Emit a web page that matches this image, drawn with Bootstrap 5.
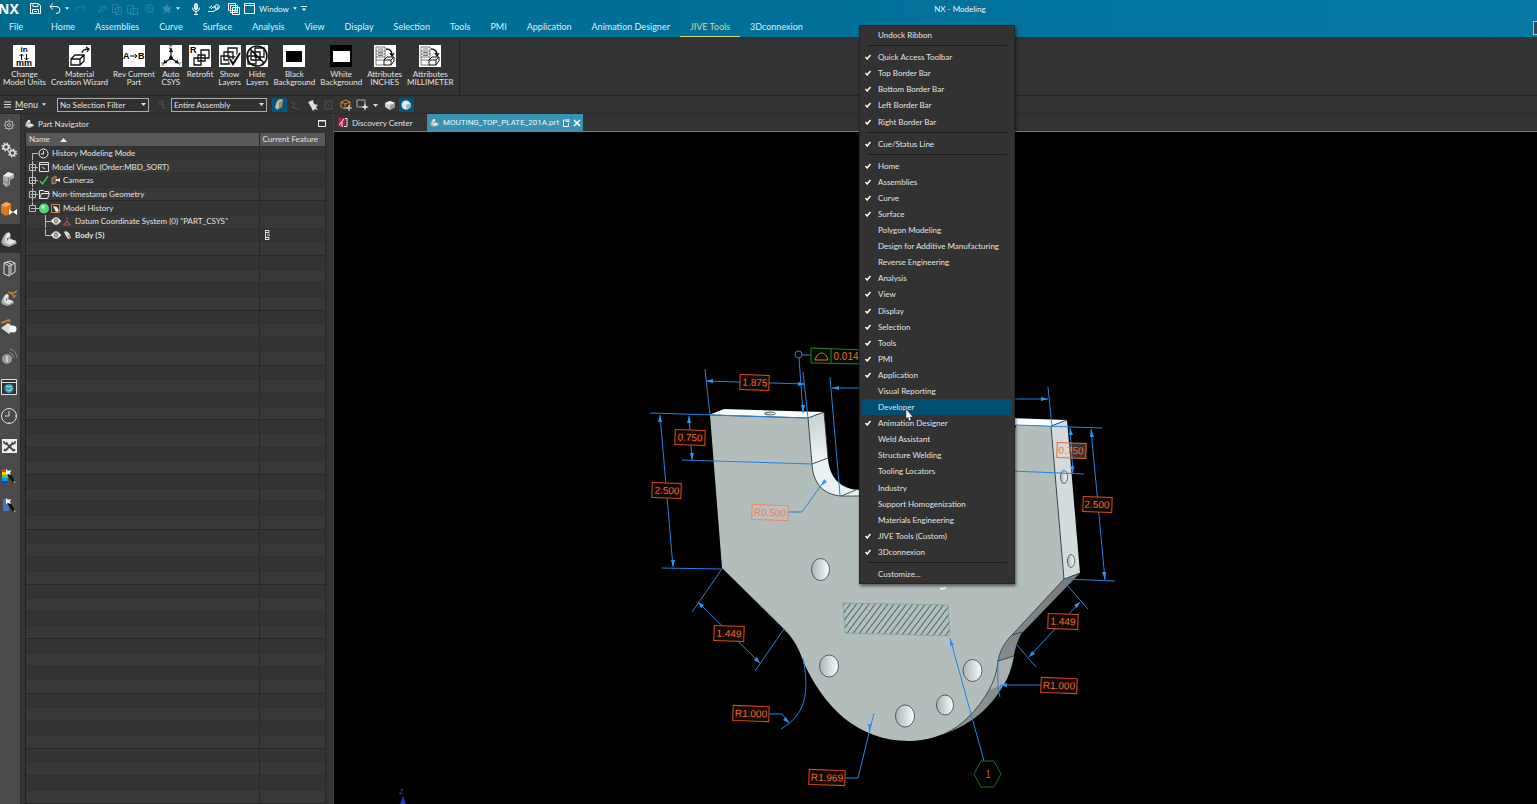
<!DOCTYPE html>
<html lang="en" data-bs-theme="dark">
<head>
<meta charset="utf-8">
<meta name="viewport" content="width=device-width, initial-scale=1">
<title>NX - Modeling</title>
<link href="https://cdn.jsdelivr.net/npm/bootstrap@5.3.0/dist/css/bootstrap.min.css" rel="stylesheet">
<style>
:root{--panel:#333;--ink:#e2e2e2;--line:#232323}
body{font:8px/12px Lato,"Noto Sans",sans-serif;background:#000;color:var(--ink)}
button,select{font:inherit;color:inherit;background:none;border:0;padding:0}
svg{display:block;flex:none;overflow:visible}
.topbar{background:linear-gradient(90deg,#006a8f,#007098 50%,#0578a4);color:#e6f4f8}
.quick{height:17px}
.quick button{height:16px}
.app-title{padding-left:76px}
.brand{font:bold 14px/16px "Noto Sans",sans-serif;color:#fff;width:20px;margin-left:-2px}
.menu-tabs{height:20px}
.menu-tabs a{font-size:9px;line-height:12px;color:#dcf0f6;padding:4px 10px 3px;border-bottom:1px solid transparent;text-decoration:none}
.menu-tabs a:first-child{padding-left:9px;padding-right:18px}
.menu-tabs a.active{color:#d9d489;border-color:#d9d489}
.dock-toggle{width:4px;height:14px;border:1px solid #9cc;background:#345;border-right:0}
.ribbon{background:var(--panel);height:59px;border-bottom:1px solid var(--line)}
.tools-group{border-right:1px solid var(--line);margin-top:3px;padding-top:4px;padding-right:3px}
.tool{line-height:8px;padding:0 2px 0 3px;min-width:27px}
.tool svg{margin:1px auto 3px}
.tool text{font-family:"Liberation Sans",sans-serif}
.filters{background:var(--panel);height:18px;border-bottom:1px solid #2a2a2a}
.filters select{height:14px;border:1px solid #aaa;appearance:none;padding:0 2px;background:#303030;line-height:12px;border-radius:0}
.menu-word{font-size:9px}
.pick{position:relative}
.pick svg{position:absolute;right:3px;top:5px;pointer-events:none}
.first-pick{margin-left:11px}
.pick-narrow{width:92px}
.pick-wide{width:96px}
.rail{width:20px;background:#4a4a4a}
.rail .gear{height:21px}
.rail-list{height:385px}
.rail-list button{flex:1 1 0;min-height:0;width:20px}
.rail-list .active{background:#303030}
.navigator{width:314px;background:var(--panel);padding:0 7px 0 4px;border-left:1px solid #282828;border-right:1px solid #444}
.nav-title{height:19px}
.tree{border-left:1px solid #222;border-right:1px solid #282828}
.tree table{height:100%;table-layout:fixed;color:var(--ink);font-size:8px}
.tree th,.tree td{padding:0;line-height:12px;border:0;border-bottom:1px solid #303030;height:13px;background:#343434;color:inherit;box-shadow:none;white-space:nowrap;vertical-align:middle}
.tree tr:nth-child(even) td{background:#383838}
.tree tr:nth-child(4n) td{border-bottom-color:#292929}
.tree th:first-child,.tree td:first-child{border-right:1px solid #282828}
.tree thead th{background:#585858;font-weight:400;padding-left:3px}
.name-col{width:233px}
.docs{height:18px;background:var(--panel);border-bottom:1px solid #3d94ad}
.doc{height:17px;padding:0 3px}
.doc-label{width:72px}
.doc.current{background:#3992b2;color:#eaf8fc;font-family:Roboto,sans-serif}
.context{position:absolute;left:859px;top:25px;width:156px;height:559px;background:#323232;border:1px solid #262626;padding:1px 2px;box-shadow:1px 2px 3px #0008;z-index:5}
.context button{flex:1 1 0;min-height:0;padding-left:3px;text-align:left}
.context button.hot{background:#004f73}
.context .tick{width:13px}
.context hr{margin:2px 5px 3px;border:0;border-top:1px solid #1d1d1d;opacity:1}
.pointer{position:absolute;left:905px;top:409px;z-index:6}
.dim{stroke:#2585dd;fill:none;stroke-width:1}
.heads{fill:#3196f2}
.frame rect{fill:#130703;stroke:#d94e1c}
.frame text{font:10px "Liberation Sans",sans-serif;fill:#f26a2c;text-anchor:middle}
.frame .pale rect{fill:#c4bdb8;stroke:#e58a6c}
.frame .pale text{fill:#e58260}
.frame .split rect{fill:#f8c8b840;stroke:#e06a45}
.frame .split text{fill:#ec7042}
</style>
</head>
<body class="vh-100 d-flex flex-column overflow-hidden position-relative">

<svg width="0" height="0" class="position-absolute" aria-hidden="true">
 <symbol id="caret" viewBox="0 0 5 3"><path d="M0 0h5L2.500 3z" fill="currentColor"/></symbol>
 <symbol id="check" viewBox="0 0 6 6"><path d="M.5 3 2.200 5 5.500 1" fill="none" stroke="#fff" stroke-width="1.500"/></symbol>
 <symbol id="part" viewBox="0 0 14 14"><path d="M0 10Q2 3 5 1.500 8 0 8.500 3L8 6.500 13 8.500 14 11 7 14 2 12.500z" fill="#a4aaac"/><path d="M5 2Q7.500.500 8 3L7 7 3 9.500Q3 5 5 2zM3 10l5-3 5.500 2L8 12z" fill="#e4e6e6"/><path d="M5 7q2-3 1.500-1L6 8z" fill="#555"/></symbol>
 <symbol id="cube" viewBox="0 0 12 12"><path d="m1 4 5-2 5 2v4l-5 3-5-3z" fill="#ccc"/><path d="m1 4 5-2 5 2-5 2z" fill="#f5f5f5"/><path d="m6 6 5-2v4l-5 3z" fill="#999"/></symbol>
 <symbol id="boxes" viewBox="0 0 22 22"><path d="M9 3h9v9H9zM5 7h9v8H5zM2 11h8v8H2z" fill="#fff" stroke="#111" stroke-width="1.300"/></symbol>
 <symbol id="attr" viewBox="0 0 22 22"><path fill="#fff" d="M0 0h22v22H0z"/><path d="M2 2h9v18H2zM2 6h9M2 9h9M2 12h9M2 15h9M4 4h5M4 7.500h5M4 10.500h5" fill="none" stroke="#555" stroke-width=".8"/><path d="M12 4q6 0 6 6m-2-2 2 3 2-3" fill="none" stroke="#111" stroke-width="1.300"/><path d="m10 15 3-3h7v4l-3 4h-7zm0 0h7v5m0-5 3-3" fill="#fff" stroke="#111"/></symbol>
 <symbol id="plus" viewBox="0 0 7 7"><path d="M.5.5h6v6h-6zM2 3.500h3M3.500 2v3" fill="none" stroke="#bbb"/></symbol>
 <symbol id="eye" viewBox="0 0 10 8"><path d="M0 4q5-7 10 0-5 7-10 0" fill="#f2f2f2"/><circle cx="5" cy="4" r="2.200" fill="#222"/><circle cx="5" cy="4" r="1" fill="#eee"/></symbol>
</svg>

<header class="topbar">
 <div class="quick d-flex align-items-center">
  <span class="brand">NX</span>
  <button aria-label="Save" class="ms-2 ps-1"><svg width="11" height="11" viewBox="0 0 11 11" fill="none" stroke="#fff"><path d="M.5.5h8l2 2v8H.5zM3 .5v3h5v-3M2.500 10.500v-4h6v4M4 8.500h3"/></svg></button>
  <button aria-label="Undo" class="ms-2"><svg width="12" height="11" viewBox="0 0 12 11" fill="none" stroke="#fff"><path d="M4 .5.800 3.500 4 6.500M1 3.500h6q4 0 4 3.500t-4 3.500"/></svg></button>
  <button aria-label="Undo list" class="ms-1"><svg width="4" height="3"><use href="#caret"/></svg></button>
  <svg class="ms-1" width="95" height="12" viewBox="0 0 95 12" fill="none" stroke="#2681a1"><path d="m9 1 3 3-3 3m3-3H6q-4 0-4 4M26 8l7-6M28 3v3l-3 3h3l6-4zM39.500 1.500h6v8h-6zM42.500 4.500h6v7h-6zM54.500 2.500h6v8h-6zM57.500 5.500h7v6h-7z"/><circle cx="76" cy="5.500" r="4"/><path d="M73 5h7v6M76 2v7"/><path d="m94 1 1.500 3 3.500.500-2.500 2 .5 3.500-3-1.700L91 10l.5-3.500-2.500-2 3.500-.5z" fill="#318db1"/></svg>
  <button aria-label="Favourites list" class="ms-2"><svg width="4" height="3"><use href="#caret"/></svg></button>
  <button aria-label="Voice" class="ms-2 ps-1"><svg width="8" height="12" viewBox="0 0 8 12" fill="none" stroke="#fff"><rect x="2.500" y=".5" width="3" height="6" rx="1.500" fill="#cde"/><path d="M.5 4.500q0 4 3.500 4t3.500-4M4 8.500v3M2 11.500h4"/></svg></button>
  <button aria-label="Touch mode" class="ms-2"><svg width="12" height="9" viewBox="0 0 12 9" fill="none" stroke="#fff"><path d="M0 7.500h5l4-2 1-3M3 5l2-2h3M1 4l3-2"/><circle cx="9" cy="3" r="2.300"/></svg></button>
  <button aria-label="Windows" class="ms-2"><svg width="12" height="12" viewBox="0 0 12 12" fill="#006d92" stroke="#fff"><path d="M.5.5h7v7h-7zM2.500 2.500h7v7h-7zM4.500 4.500h7v7h-7zM6 7h4M6 9h4"/></svg></button>
  <button class="ms-1 d-flex align-items-center gap-1"><svg width="11" height="11" viewBox="0 0 11 11" fill="none" stroke="#fff"><path d="M.5.5h10v10H.5zM.5 2.500h10"/></svg>Window<svg width="4" height="3"><use href="#caret"/></svg></button>
  <button aria-label="Customize toolbar" class="ms-1"><svg width="6" height="6" viewBox="0 0 6 6"><path d="M0 .5h6" stroke="#fff"/><path d="M1 2.500h4L3 5z" fill="#fff"/></svg></button>
  <div class="app-title flex-grow-1 text-center">NX - Modeling</div>
 </div>
 <nav class="menu-tabs d-flex align-items-start">
  <a href="#">File</a><a href="#">Home</a><a href="#">Assemblies</a><a href="#">Curve</a><a href="#">Surface</a><a href="#">Analysis</a><a href="#">View</a><a href="#">Display</a><a href="#">Selection</a><a href="#">Tools</a><a href="#">PMI</a><a href="#">Application</a><a href="#">Animation Designer</a><a href="#" class="active">JIVE Tools</a><a href="#">3Dconnexion</a>
  <span class="dock-toggle ms-auto mt-1"></span>
 </nav>
</header>

<section class="ribbon d-flex" aria-label="JIVE Tools">
 <div class="tools-group d-flex align-items-start">
  <button class="tool"><svg width="22" height="22"><path fill="#fff" d="M0 0h22v22H0z"/><g font-size="9" font-weight="bold" text-anchor="middle"><text x="11" y="7" font-size="8">in</text><text x="11" y="21">mm</text></g><path d="M8.500 15V9M6.500 11l2-2 2 2M13.500 9v6M11.500 13l2 2 2-2" fill="none" stroke="#111"/></svg>Change<br>Model Units</button>
  <button class="tool"><svg width="22" height="22"><path fill="#fff" d="M0 0h22v22H0z"/><path d="m2 14 4-4h9v6l-4 4H2zm0 0h9v6m0-6 4-4M13 8q0-4 7-4m-3-2 3 2-2 3" fill="none" stroke="#111" stroke-width="1.300"/></svg>Material<br>Creation Wizard</button>
  <button class="tool"><svg width="22" height="22"><path fill="#fff" d="M0 0h22v22H0z"/><g font-size="9" font-weight="bold"><text x="0" y="14">A</text><text x="15" y="14">B</text></g><path d="M7 11h7m-2-2 2 2-2 2" fill="none" stroke="#111"/></svg>Rev Current<br>Part</button>
  <button class="tool"><svg width="22" height="22"><path fill="#fff" d="M0 0h22v22H0z"/><path d="M11 13V5M9.500 7 11 4l1.500 3M11 13l-7 5m1-3-1 3 3-.5M11 13l7 5m-1-3 1 3-3-.5" fill="none" stroke="#111" stroke-width="1.200"/><circle cx="11" cy="13" r="2" fill="#111"/><g font-size="5"><text x="9" y="4">Z</text><text x="1" y="21">X</text><text x="18" y="21">Y</text></g></svg>Auto<br>CSYS</button>
  <button class="tool"><svg width="22" height="22"><path fill="#fff" d="M0 0h22v22H0z"/><path d="M12 5h8v8h-8zM9 10h7v6H9zM5 13h7v7H5z" fill="#fff" stroke="#111" stroke-width="1.300"/><text x="1" y="8" font-size="9" font-weight="bold">R</text></svg>Retrofit</button>
  <button class="tool"><svg width="22" height="22"><path fill="#fff" d="M0 0h22v22H0z"/><use href="#boxes"/><path d="m11 14 3 5 7-11" fill="none" stroke="#fff" stroke-width="4"/><path d="m11 14 3 5 7-11" fill="none" stroke="#111" stroke-width="2"/></svg>Show<br>Layers</button>
  <button class="tool"><svg width="22" height="22"><path fill="#fff" d="M0 0h22v22H0z"/><use href="#boxes"/><circle cx="11" cy="11" r="10" fill="none" stroke="#111" stroke-width="1.600"/><path d="m4 4 14 14" stroke="#111" stroke-width="1.600"/></svg>Hide<br>Layers</button>
  <button class="tool"><svg width="22" height="22"><path fill="#fff" d="M0 0h22v22H0z"/><path d="M3 6h16v11H3z"/></svg>Black<br>Background</button>
  <button class="tool"><svg width="22" height="22"><path d="M0 0h22v22H0z"/><path d="M3 6h17v11H3z" fill="#fff"/></svg>White<br>Background</button>
  <button class="tool"><svg width="22" height="22"><use href="#attr"/></svg>Attributes<br>INCHES</button>
  <button class="tool"><svg width="22" height="22"><use href="#attr"/></svg>Attributes<br>MILLIMETER</button>
 </div>
</section>

<section class="filters d-flex align-items-center">
 <button class="d-flex align-items-center ms-1"><svg width="7" height="7" class="me-1" stroke="#ddd"><path d="M0 1h7M0 3.500h7M0 6h7"/></svg><span class="menu-word me-1"><u>M</u>enu</span><svg width="4" height="3"><use href="#caret"/></svg></button>
 <div class="pick first-pick"><select class="pick-narrow" aria-label="Selection filter"><option>No Selection Filter</option></select><svg width="5" height="3"><use href="#caret"/></svg></div>
 <svg width="6" height="10" class="mx-2" stroke="#555" fill="none"><path d="M1 1h5v5M1 4h5v4h3"/></svg>
 <div class="pick"><select class="pick-wide" aria-label="Selection scope"><option>Entire Assembly</option></select><svg width="5" height="3"><use href="#caret"/></svg></div>
 <svg class="ms-2" width="142" height="14" viewBox="275 98 142 14">
  <path fill="#00567d" d="M272 98h15v14h-15zM399 98h15v14h-15z"/>
  <path d="m275 107 2-6 3-2 3 1-2 6-4 4z" fill="#b9bcae"/><path d="m279 102 4-1-1 6-3 2z" fill="#bd7a3d"/>
  <g fill="none" stroke="#555"><path d="m291 102 4 2-3 3 7 2M325 101h7v8h-7zM327 103l3 4"/></g>
  <path d="m308 102 5-2 1 4 4 1-2 2 2 3-3-1-2 2-2-4z" fill="#ddd"/>
  <path d="m341 102 5-2 4 2v4l-5 3-4-2zm0 0 4 2 5-2m-5 2v5" fill="none" stroke="#e08030"/><path d="M349 105v6m-3-3h6" stroke="#ddd"/>
  <path d="M357 100h8v7h-8z" fill="none" stroke="#aaa"/><path d="m365 103 1 3 3 1-3 1-1 3-1-3-3-1 3-1z" fill="#ddd"/>
  <path d="M373 104h5l-2.500 3z" fill="#ddd"/>
  <use href="#cube" x="384" y="99" width="12" height="12"/>
  <circle cx="406" cy="105" r="4.500" fill="#dfe9ec"/><path d="m406 105 5-2v4l-4 3z" fill="#8db8c8"/>
 </svg>
</section>

<main class="d-flex flex-grow-1" style="min-height:0">
 <aside class="rail">
  <button class="gear d-flex w-100 align-items-center ps-1" aria-label="Settings"><svg width="10" height="10" viewBox="0 0 10 10" fill="none" stroke="#bbb"><circle cx="5" cy="5" r="4"/><circle cx="5" cy="5" r="1.500"/><path d="M5-.5v1M5 9.500v1M-.5 5h1M9.500 5h1M1 1l.7.7M9 1l-.7.7M1 9l.7-.7M9 9l-.7-.7"/></svg></button>
  <div class="rail-list d-flex flex-column">
   <button aria-label="Assembly constraints"><svg width="18" height="18" fill="none" stroke="#ddd" stroke-width="1.500"><circle cx="6" cy="6" r="2.500"/><circle cx="12.500" cy="12" r="2.500"/><circle cx="6" cy="6" r="3.800" stroke-dasharray="1.500 1.500"/><circle cx="12.500" cy="12" r="3.800" stroke-dasharray="1.500 1.500"/></svg></button>
   <button aria-label="Assembly navigator"><svg width="18" height="18"><path d="m3 6 5-4 6 2v4l-4 2v5l-4 2-3-3z" fill="#aaa"/><path d="m3 6 5-4 6 2-5 3z" fill="#eee"/><path d="m9 7-1 9M3 11l5 2" stroke="#777"/></svg></button>
   <button aria-label="Constraint navigator"><svg width="18" height="18"><path d="m1 5 5-3 5 2v9l-5 3-5-3z" fill="#d9781f"/><path d="m1 5 5-3 5 2-5 3z" fill="#f5aa55"/><path d="m9 9 4 3-4 3zM17 9l-4 3 4 3z" fill="#fff"/></svg></button>
   <button class="active" aria-label="Part navigator"><svg width="18" height="18" viewBox="-1 -1 16 16"><use href="#part" width="14" height="14"/></svg></button>
   <button aria-label="Reuse library"><svg width="18" height="18" fill="none" stroke="#ddd"><path d="m4 4 6-2 5 2v9l-6 4-5-2zm0 0 5 3 6-3M9 7v10M6 3l5 2v10"/></svg></button>
   <button aria-label="HD3D tools"><svg width="18" height="18"><use href="#part" x="1" y="4" width="13" height="13"/><path d="m8 3 4 2 5-3m-6 1 3 5 2-2" fill="none" stroke="#c07a2c" stroke-width="1.500"/></svg></button>
   <button aria-label="Measure"><svg width="18" height="18"><path d="m1 10 7-5 7 5-6 6z" fill="#ddd"/><path d="m1 5 8-3 1 2" fill="none" stroke="#c27a33" stroke-width="2"/><circle cx="13" cy="11" r="3.500" fill="#fff"/></svg></button>
   <button aria-label="Notifications"><svg width="18" height="18"><circle cx="7" cy="11" r="5" fill="#999"/><path d="M7 8v6" stroke="#ccc" stroke-width="2"/><path d="M9 4q4 1 5 6M10 1q6 1 7 9" fill="none" stroke="#888"/></svg></button>
   <button aria-label="Web browser"><svg width="18" height="18"><path d="M1.500 1.500h15v15h-15zM1.500 4.500h15" fill="#333" stroke="#ddd"/><circle cx="9" cy="10.500" r="4.500" fill="#299eb8"/><path d="m6 8 3 1 3-1M7 12l3 1 2-3" fill="none" stroke="#b8e6ee"/></svg></button>
   <button aria-label="History"><svg width="18" height="18" fill="none" stroke="#ddd"><circle cx="9" cy="9" r="7.500"/><path d="M9 4v5H5M9 15v1M15 9h1"/></svg></button>
   <button aria-label="Process studio"><svg width="18" height="18"><path d="M2 2h15v14H2z" fill="#eee"/><path d="m6 6 8 8M13 6l-8 8" stroke="#444" stroke-width="1.800"/><path d="M4 4v2l2 1 1-2M15 4v2l-2 1-1-2M5 12l-1 2M14 12l1 2" fill="none" stroke="#444" stroke-width="1.500"/></svg></button>
   <button aria-label="Visualization"><svg width="18" height="18"><path fill="#e31" d="M2 2h6v3H2z"/><path fill="#fc0" d="M2 5h6v3H2z"/><path fill="#3d3" d="M2 8h6v3H2z"/><path fill="#09e" d="M2 11h6v3H2z"/><path fill="#23c" d="M2 14h6v2H2z"/><path d="m8 6 6 9" stroke="#111" stroke-width="3"/><path d="m6 2 2 2 3-1-1 3 1 2-3-1-2 1z" fill="#fff"/><path d="m14 14 1 2" stroke="#e5d34a"/></svg></button>
   <button aria-label="Roles"><svg width="18" height="18"><path fill="#4774ba" d="M3 3h6v12H3z"/><path d="m8 6 6 9" stroke="#111" stroke-width="3"/><path d="m6 2 2 2 3-1-1 3 1 2-3-1-2 1z" fill="#fff"/><path d="m14 14 1 2" stroke="#e5d34a"/></svg></button>
  </div>
 </aside>

 <section class="navigator d-flex flex-column" aria-label="Part Navigator">
  <div class="nav-title d-flex align-items-center"><svg width="9" height="9" class="me-1"><use href="#part"/></svg><span>Part Navigator</span><button class="ms-auto" aria-label="Maximize"><svg width="8" height="7"><path d="M.5.5h7v6h-7z" fill="none" stroke="#eee"/><path d="M0 1h8" stroke="#eee"/></svg></button></div>
  <div class="tree flex-grow-1" style="min-height:0">
   <table class="table mb-0">
    <colgroup><col class="name-col"><col></colgroup>
    <thead><tr><th scope="col">Name <svg class="d-inline-block ms-2" width="7" height="4"><path d="M0 4h7L3.500 0z" fill="#eee"/></svg></th><th scope="col">Current Feature</th></tr></thead>
    <tbody id="rows">
     <tr><td><div class="d-flex"><svg width="26" height="12" fill="none" stroke="#bbb"><path d="M6.500 13V6.500H12"/><circle cx="17.500" cy="6.500" r="4.500" stroke="#eee"/><path d="M17.500 4v3H15" stroke="#eee"/></svg>History Modeling Mode</div></td><td></td></tr>
     <tr><td><div class="d-flex"><svg width="26" height="12" fill="none" stroke="#bbb"><path d="M6.500 0v13M6 6.500h6"/><use href="#plus" x="3" y="3" width="7" height="7"/><path d="M13.500 1.500h9v9h-9zM13.500 3.500h9M16 6l3 2" stroke="#ddd"/></svg>Model Views (Order:MBD_SORT)</div></td><td></td></tr>
     <tr><td><div class="d-flex"><svg width="37" height="12" fill="none" stroke="#bbb"><path d="M6.500 0v13M6 6.500h6"/><use href="#plus" x="3" y="3" width="7" height="7"/><path d="m14 7 2.500 3L22 2" stroke="#2fc94b" stroke-width="1.500"/><path d="m26 4 4-2v7l-4 1z" fill="#555" stroke="#c88b50"/><path d="M30 5h2l2-1v4l-2-1h-2z" fill="#ddd" stroke="none"/></svg>Cameras</div></td><td></td></tr>
     <tr><td><div class="d-flex"><svg width="26" height="12" fill="none" stroke="#bbb"><path d="M6.500 0v13M6 6.500h6"/><use href="#plus" x="3" y="3" width="7" height="7"/><path d="M13.500 10.500v-8h4l1 1h4v2m-9 5 2-5h8l-2 5z" stroke="#eee"/></svg>Non-timestamp Geometry</div></td><td></td></tr>
     <tr><td><div class="d-flex"><svg width="37" height="12" fill="none" stroke="#bbb"><path d="M6.500 0v3M7 6.500h6M3.500 3.500h6v6h-6zM5 6.500h3"/><circle cx="18" cy="6.500" r="5" fill="#4fd972" stroke="none"/><circle cx="17" cy="5" r="2" fill="#a2f3b5" stroke="none"/><path d="M25.500 2.500h8v8h-8z" stroke="#d2843e"/><path d="m27 4 4 1 2 4-3 1z" fill="#eee" stroke="none"/></svg>Model History</div></td><td></td></tr>
     <tr><td><div class="d-flex"><svg width="49" height="12" fill="none" stroke="#bbb"><path d="M19.500 0v13M19 6.500h6"/><use href="#eye" x="25" y="2" width="10" height="8"/><path d="M41 2v5l-4 3M41 7l4 3M38 10h6L41 6z" stroke="#a84866"/></svg>Datum Coordinate System (0) "PART_CSYS"</div></td><td></td></tr>
     <tr><td><div class="d-flex fw-bold"><svg width="49" height="12" fill="none" stroke="#bbb"><path d="M19.500 0v6.500H25"/><use href="#eye" x="25" y="2" width="10" height="8"/><path d="m38 3 2-1 3 2 2 5-3 1-2-3z" fill="#ddd" stroke="none"/><path d="m41 6 4 1-1 3z" fill="#b9854e" stroke="none"/></svg>Body (5)</div></td><td><svg width="18" height="10" fill="none" stroke="#ddd"><path d="M5.500 0v10M5 .5h4v2H5M5 9.500h4v-2H5"/><path d="M7.500 4h2v2h-2z" stroke="#d08a45"/></svg></td></tr>
    </tbody>
   </table>
  </div>
 </section>

 <section class="d-flex flex-column flex-grow-1" style="min-width:0">
  <div class="docs d-flex">
   <button class="doc d-flex align-items-center"><svg width="11" height="11" class="me-1"><path d="M1 1h7v9H2z" fill="#a8214a"/><path d="m2 8 5-6M8 1.500h2v8H7M5 5v5" fill="none" stroke="#eee"/></svg><span class="doc-label text-start">Discovery Center</span></button>
   <button class="doc current d-flex align-items-center"><svg width="9" height="9" class="me-1"><use href="#part"/></svg><span>MOUTING_TOP_PLATE_201A.prt</span><svg class="ms-1" width="7" height="8" fill="none" stroke="#fff"><path d="M5 1H.5v6.500h5V4M3 2.500h3V0"/></svg><svg class="ms-1" width="6" height="6" stroke="#fff" stroke-width="1.500"><path d="m0 0 6 6M6 0 0 6"/></svg></button>
  </div>
  <div class="flex-grow-1" style="min-height:0">
  <svg class="w-100 h-100 overflow-hidden" viewBox="334 132 1203 672" preserveAspectRatio="xMinYMin meet" role="img" aria-label="Mounting plate model with dimensions">
   <defs>
    <linearGradient id="hole"><stop stop-color="#aab4b3"/><stop offset="1" stop-color="#fafefe"/></linearGradient>
    <linearGradient id="edge" x2="1" y2="0"><stop stop-color="#9ba2a3"/><stop offset="1" stop-color="#737879"/></linearGradient>
    <linearGradient id="wall" x2="0" y2="1"><stop stop-color="#c6cecf"/><stop offset="1" stop-color="#f0f7f8"/></linearGradient>
    <pattern id="hatch" width="5" height="5" patternUnits="userSpaceOnUse" patternTransform="rotate(37)"><path d="M2.500 0v5" stroke="#4d6876"/></pattern>
   </defs>
   <path fill="url(#edge)" d="M1064 579 1080 573 1021 634Q1016 644 1014 655 1010 675 1003 686C990 708 972 724 944 734L909 741 960 640z"/>
   <path fill="#b2bdbc" d="M710 415 808 418 812 464C813 482 822 495 842 496H1000L1016 425 1051 426 1064 579 1012 635C1004 643 1000 651 998 661 997 672 994 681 989 690 971 722 943 741 909 741 857 741 823 706 803 661 799 648 793 638 784 629L722 568z"/>
   <path fill="#f7fcfc" d="M709 415 724 409 824 412 808 418zM1010 418 1067 420 1051 426 1010 425z"/>
   <path fill="url(#wall)" d="M808 418 824 412 828 458 812 464z"/>
   <path fill="#e8f1f3" d="M812 464 828 458C829 477 840 490 862 490V496H842C822 495 813 482 812 464z"/>
   <path fill="#d3dcdc" d="M1051 426 1067 420 1080 573 1064 579z"/>
   <path fill="#c3cacb" d="M998 661 1014 656Q1011 674 1004 684L989 690Q996 676 998 661z" opacity=".6"/>
   <g fill="none" stroke="#29353a" stroke-width=".8"><path d="M710 415 808 418 812 464C813 482 822 495 842 496H860M808 418 824 412 828 458 812 464M841 496 856 490M1051 426 1064 579M1051 426 1067 420M1064 579 1012 635C1004 643 1000 651 998 661 997 672 994 681 989 690 977 711 961 727 944 734M998 661 1014 656M1012 635 1022 632M1064 579 1080 573"/><path d="m940 589 6-1" stroke="#eee" stroke-width="2"/></g>
   <g fill="url(#hole)" stroke="#39464a" stroke-width=".8"><ellipse cx="820.500" cy="569.500" rx="9" ry="11"/><ellipse cx="829" cy="666" rx="9.500" ry="11"/><ellipse cx="905" cy="716" rx="9.500" ry="11"/><ellipse cx="945" cy="705" rx="8.500" ry="10"/><ellipse cx="972.500" cy="670.500" rx="9.500" ry="11"/><ellipse cx="1064" cy="477" rx="3.500" ry="6.500"/><ellipse cx="1071" cy="561" rx="3.500" ry="6.500"/><ellipse cx="770" cy="413.500" rx="5.500" ry="1.500"/></g>
   <path d="M843 603 948 605 950 636 845 633z" fill="url(#hatch)" stroke="#74a890" stroke-width=".7"/>
   <g class="dim">
    <path d="M705 369 710 415M650 413 808 418M682 460 812 464M803 372 808 418M706 381 805 384M662 568 722 569M660 415 673 567M689 416 692 460M799 358 803 413M830 377 840 495M832 388H862M1010 399H1048M1048 387 1052 427M1016 425 1102 428M1010 471 1084 474M1070 428 1073 473M1091 429 1105 580M1064 579 1115 581M825 480 802 512H788"/>
    <path d="M722 569 692 612M698 602 760 663M784 629 755 671M803 658C810 694 805 715 781 729M769 714H782L789 723M874 713 858 778H845M1067 585 1088 609M1080 602 1029 657M1017 645 1036 667M1041 685H1000M998 662Q997 690 1000 697M950 638 984 761M802 355H811"/>
    <circle cx="798.500" cy="354.500" r="3.500"/>
   </g>
   <g class="heads">
    <path d="m706 381 7-2v4zM805 384l-7-2v4zM660 415l-2 7 4 .1zM673 567l-2-7h4zM689 416l-2 7h4zM692 460l-2-7h4zM803 413l-2-8h4zM832 388l7-2v4zM1048 399l-7-2v4zM1070 428l-1 7h4zM1073 473l-3-7h4zM1091 429l-1 8h4zM1105 580l-3-8h4zM821 486l3-7 3 3zM698 602l6 3-3 3zM760 663l-3-6-3 3zM789 723l-6-3 3-3zM869 731l-1-7h4zM1080 602l-6 3 3 3zM1029 657l3-6 3 3zM1000 685l7-2v4zM950 638l0 8 4-1z"/>
   </g>
   <g class="frame">
    <g transform="rotate(2 755 382)"><rect x="740" y="375" width="29" height="15"/><text x="755" y="386">1.875</text></g>
    <g transform="rotate(2 690 438)"><rect x="675" y="430" width="30" height="15"/><text x="690" y="441">0.750</text></g>
    <g transform="rotate(2 667 491)"><rect x="652" y="483" width="29" height="15"/><text x="667" y="494">2.500</text></g>
    <g class="pale" transform="rotate(2 770 512)"><rect x="752" y="505" width="36" height="15"/><text x="770" y="516">R0.500</text></g>
    <g transform="rotate(2 729 633)"><rect x="714" y="626" width="30" height="15"/><text x="729" y="637">1.449</text></g>
    <g transform="rotate(2 751 713)"><rect x="733" y="706" width="36" height="15"/><text x="751" y="717">R1.000</text></g>
    <g transform="rotate(2 827 777)"><rect x="809" y="770" width="36" height="15"/><text x="827" y="781">R1.969</text></g>
    <g transform="rotate(2 1063 621)"><rect x="1048" y="614" width="30" height="15"/><text x="1063" y="625">1.449</text></g>
    <g transform="rotate(2 1059 685)"><rect x="1041" y="678" width="36" height="15"/><text x="1059" y="689">R1.000</text></g>
    <g transform="rotate(2 1097 504)"><rect x="1083" y="497" width="29" height="15"/><text x="1097" y="508">2.500</text></g>
    <g class="split" transform="rotate(2 1071 450)"><rect x="1057" y="443" width="29" height="15"/><text x="1071" y="454">0.750</text></g>
    <path d="M811 348 865 350V364L811 363zM831 349V363" fill="#050" fill-opacity=".15" stroke="#27852a"/>
    <path d="M815 360h13q-2-7-6.500-7t-6.500 7z" fill="none" stroke="#f26a2c"/>
    <text x="846" y="360">0.014</text>
    <path d="M981 761h13l7 13-7 13h-13l-7-13z" fill="none" stroke="#1c6b28"/><text x="988" y="778" style="fill:#e0453c">1</text>
   </g>
   <text x="399" y="794" fill="#3046d8" font-size="8" font-family="Liberation Sans,sans-serif">Z</text><path d="m403 796-3 8h6z" fill="#2238c8"/>
  </svg>
  </div>
 </section>
</main>

<div class="context d-flex flex-column" role="menu" id="ribbonMenu"></div>
<svg class="pointer" width="8" height="12"><path d="m1 0 7 8H5l1 3-2 1-1-4-2 2z" fill="#fff" stroke="#222" stroke-width=".5"/></svg>

<script src="https://cdn.jsdelivr.net/npm/bootstrap@5.3.0/dist/js/bootstrap.bundle.min.js"></script>
<script>
// A leading "+" marks a checked entry, "-" alone is a divider.
const entries = ["Undock Ribbon","-","+Quick Access Toolbar","+Top Border Bar","+Bottom Border Bar","+Left Border Bar","+Right Border Bar","-","+Cue/Status Line","-","+Home","+Assemblies","+Curve","+Surface","Polygon Modeling","Design for Additive Manufacturing","Reverse Engineering","+Analysis","+View","+Display","+Selection","+Tools","+PMI","+Application","Visual Reporting","Developer","+Animation Designer","Weld Assistant","Structure Welding","Tooling Locators","Industry","Support Homogenization","Materials Engineering","+JIVE Tools (Custom)","+3Dconnexion","-","Customize..."];
document.getElementById("ribbonMenu").innerHTML = entries.map(e => e === "-" ? "<hr>" :
 `<button role="menuitem" class="d-flex align-items-center${e === "Developer" ? " hot" : ""}"><span class="tick">${e[0] === "+" ? '<svg width="6" height="6"><use href="#check"/></svg>' : ""}</span>${e.replace(/^\+/, "")}</button>`).join("");
// Empty striped rows fill the rest of the tree.
document.getElementById("rows").insertAdjacentHTML("beforeend", "<tr><td></td><td></td></tr>".repeat(41));
</script>
</body>
</html>
